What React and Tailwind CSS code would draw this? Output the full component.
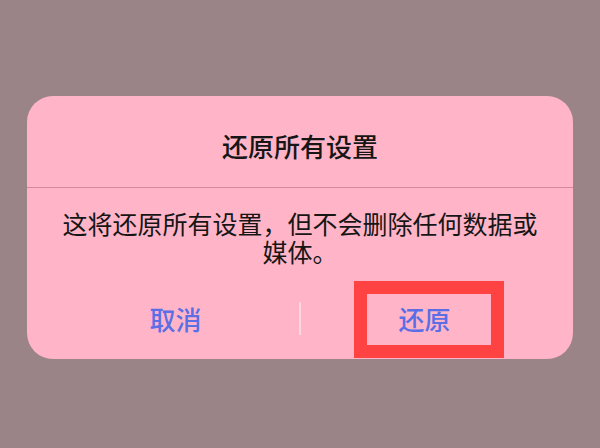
export default function App() {
  return (
    <div
      className="w-[600px] h-[448px] bg-[#9a8487] pt-[96px] overflow-hidden"
      style={{ fontFamily: '"Noto Sans CJK SC", "Noto Sans", sans-serif' }}
    >
      <div className="relative mx-auto w-[546px] h-[263px] rounded-[26px] bg-[#ffb5c7] flex flex-col">
        <div className="h-[91px] pt-[8px] flex items-center justify-center text-[26px] font-medium text-[#161616]">
          还原所有设置
        </div>
        <div className="h-px bg-[#d9879c]" />
        <div className="pt-[21px] px-[34px] text-center text-[25px] leading-[28px] text-[#161616]">
          这将还原所有设置，但不会删除任何数据或媒体。
        </div>
        <div className="mt-[28px] px-[24px] h-[50px] grid grid-cols-2 relative">
          <div className="flex items-center justify-center text-[26px] font-medium text-[#5a6fe6]">取消</div>
          <div className="flex items-center justify-center text-[26px] font-medium text-[#5a6fe6]">还原</div>
          <div className="absolute left-[272px] top-[9px] w-[2px] h-[33px] bg-[#fbd6df]" />
        </div>
        <div className="absolute left-[327px] top-[185px] w-[150px] h-[77px] border-[13px] border-[#ff4242]" />
      </div>
    </div>
  );
}
